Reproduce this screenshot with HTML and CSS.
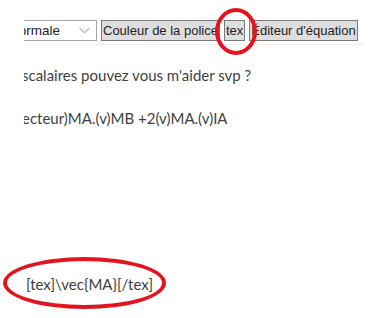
FILE: index.html
```html
<!DOCTYPE html>
<html lang="fr">
<head>
  <meta charset="UTF-8">
  <title>Message</title>
  <link rel="stylesheet" href="styles.css">
</head>
<body>
  <div class="editor">
    <div class="toolbar">
      <div class="size-select">
        <span>Normale</span>
        <svg class="chevron" width="11" height="7" viewBox="0 0 11 7"><path d="M0.5 0.8 L5.5 5.8 L10.5 0.8" fill="none" stroke="#8a8a8a" stroke-width="1"/></svg>
      </div>
      <button class="tool-btn">Couleur de la police</button>
      <button class="tool-btn">tex</button>
      <button class="tool-btn">Éditeur d'équation</button>
    </div>

    <div class="post">
      <p class="line">scalaires pouvez vous m'aider svp ?</p>
      <p class="line">ecteur)MA.(v)MB +2(v)MA.(v)IA</p>
    </div>

    <p class="tex-line">[tex]\vec{MA}[/tex]</p>
  </div>

  <!-- red marks drawn over the screenshot -->
  <div class="mark mark-btn"></div>
  <div class="mark mark-tex"></div>
</body>
</html>
```

FILE: styles.css
```css
body {
  margin: 0;
  padding: 0;
  background-color: #fff;
  font-family: Lato, "Open Sans", sans-serif;
  overflow: hidden;
}

.editor {
  margin-left: 24px;
  padding-top: 20px;
  overflow: hidden;
}

.toolbar {
  display: flex;
  align-items: center;
  gap: 4px;
  margin-right: 8px;
  padding-bottom: 3px;
  border-bottom: 1px solid #efefef;
  font-family: Arial, "Liberation Sans", sans-serif;
  white-space: nowrap;
}

.size-select {
  flex-shrink: 0;
  box-sizing: border-box;
  width: 94px;
  height: 21px;
  margin-left: -21px;
  padding: 0 6px 0 5px;
  display: flex;
  align-items: center;
  justify-content: space-between;
  border: 1px solid #a5a5a5;
  font-size: 13.5px;
  color: #222;
}

.tool-btn {
  flex-shrink: 0;
  height: 21px;
  padding: 0 1px;
  margin: 0;
  font-family: Arial, "Liberation Sans", sans-serif;
  font-size: 13px;
  color: #222;
  white-space: nowrap;
  background-color: #dedede;
  border: 1px solid #7a7a7a;
  border-radius: 0;
}

.post {
  overflow: hidden;
  white-space: nowrap;
}

.line {
  margin: 0;
  margin-left: -2px;
  font-size: 15px;
  color: #3f3f3f;
}

.line:first-child {
  margin-top: 21px;
}

.line + .line {
  margin-top: 25px;
}

.tex-line {
  margin: 148px 0 0 2px;
  font-size: 15px;
  color: #3f3f3f;
}

.mark {
  position: absolute;
  border: 4px solid #e2141e;
  border-radius: 50%;
  box-sizing: border-box;
}

.mark-btn {
  left: 215px;
  top: 8px;
  width: 42px;
  height: 47px;
}

.mark-tex {
  left: 3px;
  top: 257px;
  width: 163px;
  height: 52px;
}
```
